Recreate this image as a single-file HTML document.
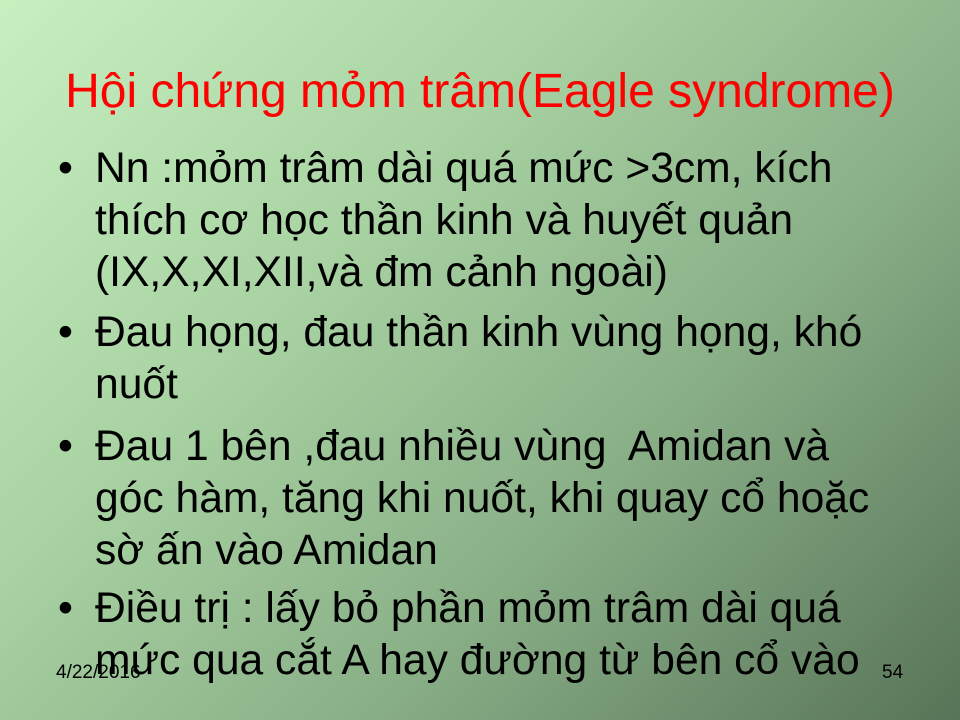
<!DOCTYPE html>
<html><head><meta charset="utf-8"><style>
html,body{margin:0;padding:0}
body{width:960px;height:720px;overflow:hidden;position:relative;
background:linear-gradient(135deg,#c6f0bf 0%,#a8d2a2 35%,#88ae86 65%,#587458 100%);
font-family:"Liberation Sans",Arial,sans-serif;}
h1{position:absolute;top:64px;left:0;width:960px;text-align:center;margin:0;
font-weight:normal;font-size:48px;color:#f00;line-height:56px;}
.p{position:absolute;left:95px;font-size:42.6px;line-height:52px;color:#000;white-space:nowrap}
.b{position:absolute;left:-37px;}
.f{position:absolute;font-size:19px;color:#000;top:662px}
</style></head><body>
<h1>Hội chứng mỏm trâm(Eagle syndrome)</h1>
<div class="p" style="top:142px"><span class="b">•</span>Nn :mỏm trâm dài quá mức &gt;3cm, kích<br>thích cơ học thần kinh và huyết quản<br>(IX,X,XI,XII,và đm cảnh ngoài)</div>
<div class="p" style="top:306px"><span class="b">•</span>Đau họng, đau thần kinh vùng họng, khó<br>nuốt</div>
<div class="p" style="top:420px"><span class="b">•</span>Đau 1 bên ,đau nhiều vùng&nbsp; Amidan và<br>góc hàm, tăng khi nuốt, khi quay cổ hoặc<br>sờ ấn vào Amidan</div>
<div class="f" style="left:56px">4/22/2016</div>
<div class="f" style="left:882px">54</div>
<div class="p" style="top:582px"><span class="b">•</span>Điều trị : lấy bỏ phần mỏm trâm dài quá<br>mức qua cắt A hay đường từ bên cổ vào</div>
</body></html>
